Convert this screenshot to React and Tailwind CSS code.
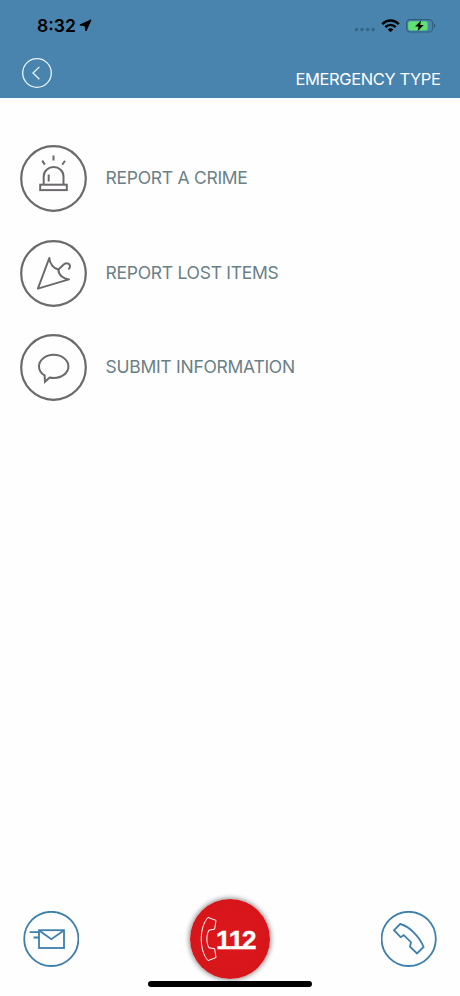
import React from 'react';

const SirenIcon = () => (
  <svg width="67" height="67" viewBox="0 0 67 67" fill="none" stroke="#6b696b" strokeWidth="2">
    <circle cx="33.5" cy="33.5" r="32.3" strokeWidth="2.2" />
    <path d="M23.7 39.5V31.4a9.9 9.4 0 0 1 19.8 0V39.5" />
    <rect x="20.2" y="39.7" width="26.6" height="5.4" />
    <path d="M28.7 29.5V36.5M33.5 10.4V15.6M22.2 15.6L24.8 19.6M45 15.8L42.2 19.8" />
  </svg>
);

const UmbrellaIcon = () => (
  <svg width="67" height="67" viewBox="0 0 67 67" fill="none" stroke="#6b696b" strokeWidth="2" strokeLinejoin="round" strokeLinecap="round">
    <circle cx="33.5" cy="33.5" r="32.3" strokeWidth="2.2" />
    <path d="M29.3 18L17.9 48.6L49 39.4C43 38.8 38.6 35 38.3 29.4C33.6 28.4 29.8 24 29.3 18Z" />
    <path d="M38.5 29.4L43.4 24.8C46.8 21.2 52.4 24.8 48.9 28.8" />
  </svg>
);

const SpeechIcon = () => (
  <svg width="67" height="67" viewBox="0 0 67 67" fill="none" stroke="#6b696b" strokeWidth="2">
    <circle cx="33.5" cy="33.5" r="32.3" strokeWidth="2.2" />
    <path d="M24.6 41.4C21 39.2 19 36 19 32.4C19 25.9 25.6 20.8 33.7 20.8S48.4 25.9 48.4 32.4S41.8 44 33.7 44C32.2 44 30.8 43.8 29.6 43.5L25 47.8Z" />
  </svg>
);

const MailButton = () => (
  <svg width="56" height="56" viewBox="0 0 56 56" fill="none" stroke="#3d7fad" strokeWidth="1.8">
    <circle cx="28.3" cy="27.9" r="27.1" />
    <rect x="16" y="19.2" width="25" height="17.8" />
    <path d="M16.2 19.6L28.3 28.2L40.8 19.6M6.6 21.2H16M10.6 26.5H16" />
  </svg>
);

const PhoneButton = () => (
  <svg width="56" height="56" viewBox="0 0 56 56" fill="none" stroke="#3d7fad" strokeWidth="1.8">
    <circle cx="27.7" cy="27.9" r="27.1" />
    <path d="M19.2 13L13 19.2L19.6 26.2L22.8 24.2L30 31.2L29 35.6L36 42.5L42.6 36C39.2 27.2 29.2 15.4 19.2 13Z" />
  </svg>
);

const StatusBar = () => (
  <div className="flex h-[51px] items-center pl-[37px] pr-[24px]">
    <span className="text-[17.5px] font-semibold leading-none text-black">8:32</span>
    <svg className="ml-[3px]" width="13" height="13" viewBox="0 0 13 13">
      <path d="M12 .9L.9 5.9L6 6.8L7 12Z" fill="#000" stroke="#000" strokeWidth="1" strokeLinejoin="round" />
    </svg>
    <svg className="ml-auto mt-2" width="22" height="5" viewBox="0 0 22 5" fill="#356587">
      <circle cx="2.5" cy="2.5" r="1.8" />
      <circle cx="8" cy="2.5" r="1.8" />
      <circle cx="13.6" cy="2.5" r="1.8" />
      <circle cx="19.2" cy="2.5" r="1.8" />
    </svg>
    <svg className="ml-[5px]" width="19" height="14" viewBox="0 0 19 14" fill="none" stroke="#000" strokeWidth="2.5">
      <path d="M1.2 5.1C6 .3 13 .3 17.8 5.1M4.3 8.1C7.4 5.2 11.6 5.2 14.7 8.1" />
      <path d="M6.7 10.4C8.4 9 10.6 9 12.3 10.4L9.5 13.3Z" fill="#000" stroke="none" />
    </svg>
    <svg className="ml-[6px]" width="30" height="14" viewBox="0 0 30 14">
      <rect x=".6" y=".6" width="26" height="12.4" rx="3.6" fill="none" stroke="#315d7c" strokeWidth="1.1" />
      <path d="M28 4.6C29.8 5.3 29.8 8.2 28 9Z" fill="#315d7c" />
      <rect x="2.2" y="2.2" width="19.4" height="9.2" rx="2" fill="#5fe070" />
      <path d="M15 1.6L9 7.5H12.6L11.6 12.2L17.8 6.1H14.2Z" fill="#000" />
    </svg>
  </div>
);

const options = [
  { label: 'REPORT A CRIME', Icon: SirenIcon },
  { label: 'REPORT LOST ITEMS', Icon: UmbrellaIcon },
  { label: 'SUBMIT INFORMATION', Icon: SpeechIcon },
];

const App = () => {
  return (
    <div className="flex h-[996px] w-[460px] flex-col overflow-hidden bg-[#fefefe] font-['Inter',sans-serif]">
      <header className="h-[98px] bg-[#4884ad]">
        <StatusBar />
        <div className="flex items-start justify-between pl-[22px] pr-5 pt-[7px]">
          <svg width="30" height="30" viewBox="0 0 30 30" fill="none" stroke="#e9f5fb" strokeWidth="1.3">
            <circle cx="15" cy="15" r="14.3" />
            <path d="M17.4 8.9L11 15L17.4 21.2" />
          </svg>
          <h1 className="-mr-[0.5px] mt-[11px] text-[16.5px] leading-[20px] tracking-[-0.4px] text-white">EMERGENCY TYPE</h1>
        </div>
      </header>

      <main className="flex flex-1 flex-col gap-[27.5px] pl-5 pt-[47px]">
        {options.map(({ label, Icon }) => (
          <button key={label} className="flex items-center gap-[18.5px] text-left">
            <Icon />
            <span className="-mt-px text-[17.5px] font-normal leading-[20px] tracking-[-0.27px] text-[#6a8086]">{label}</span>
          </button>
        ))}
      </main>

      <footer className="flex h-[97px] items-start justify-between pl-[23px] pr-[23px]">
        <div className="mt-3">
          <MailButton />
        </div>
        <div className="relative flex h-[80px] w-[80px] items-center rounded-full bg-[radial-gradient(circle,#dc181c_0%,#d6151a_75%,#c61419_100%)] shadow-[0_0_5px_1px_rgba(0,0,0,0.45)]">
          <svg className="absolute left-0 top-0" width="80" height="80" viewBox="0 0 80 80" fill="none" stroke="#fff" strokeWidth="1">
            <path d="M18 18.4L26 21.4L24.6 30.2L18.8 31.2C16.2 37 16.2 43 18.8 48.8L24.6 49.6L26 58.6L18 61.6C9 51.6 9 28.4 18 18.4Z" strokeLinejoin="round" />
          </svg>
          <span className="ml-[26px] mt-[2px] font-['Liberation_Sans',sans-serif] text-[26.5px] font-bold leading-none tracking-[-1.9px] text-white [-webkit-text-stroke:0.4px_#fff] [font-kerning:none]">112</span>
        </div>
        <div className="mt-3">
          <PhoneButton />
        </div>
      </footer>
      <div className="absolute left-[148px] top-[981px] h-[6px] w-[164px] rounded-full bg-black" />
    </div>
  );
};

export default App;
